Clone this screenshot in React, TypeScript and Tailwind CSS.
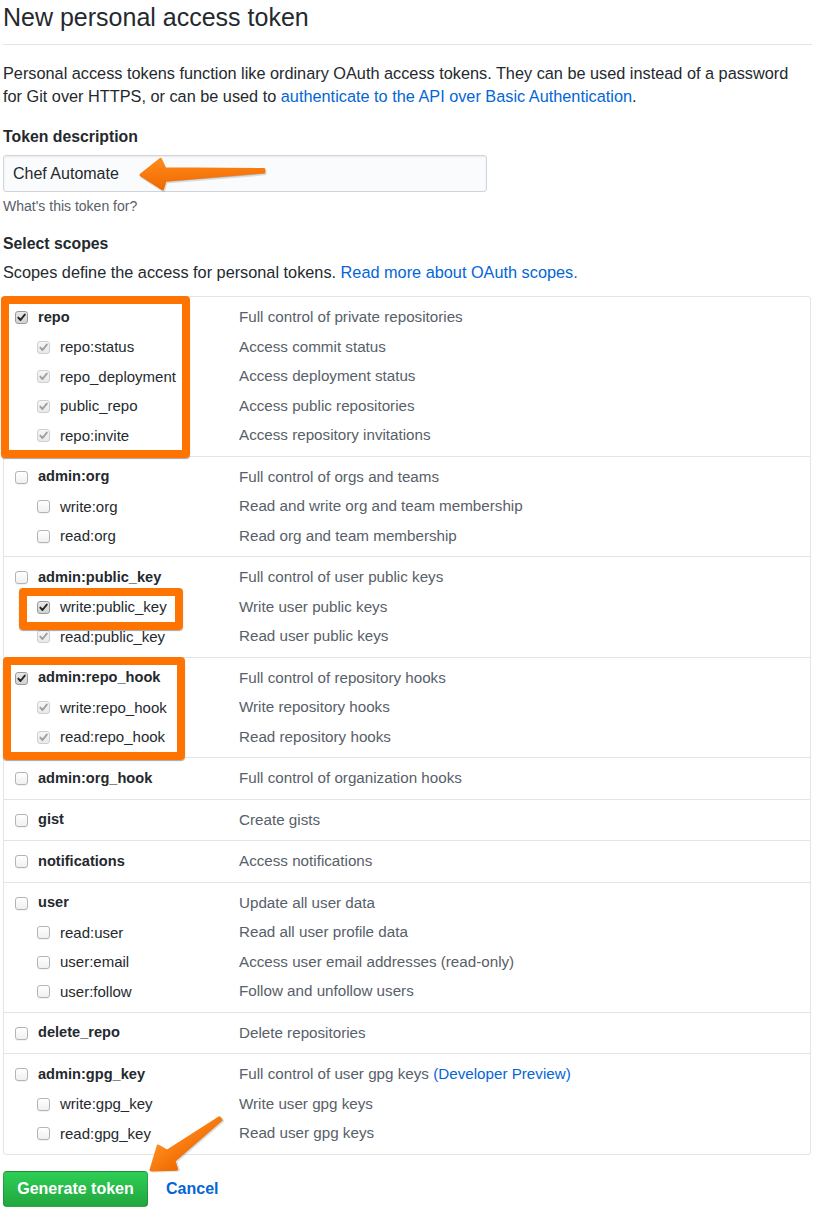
import React from "react";

type CheckState = "off" | "on" | "implied";

interface Scope {
  name: string;
  desc: React.ReactNode;
  state: CheckState;
}

interface ScopeGroup {
  top: Scope;
  subs: Scope[];
}

const groups: ScopeGroup[] = [
  {
    top: { name: "repo", desc: "Full control of private repositories", state: "on" },
    subs: [
      { name: "repo:status", desc: "Access commit status", state: "implied" },
      { name: "repo_deployment", desc: "Access deployment status", state: "implied" },
      { name: "public_repo", desc: "Access public repositories", state: "implied" },
      { name: "repo:invite", desc: "Access repository invitations", state: "implied" },
    ],
  },
  {
    top: { name: "admin:org", desc: "Full control of orgs and teams", state: "off" },
    subs: [
      { name: "write:org", desc: "Read and write org and team membership", state: "off" },
      { name: "read:org", desc: "Read org and team membership", state: "off" },
    ],
  },
  {
    top: { name: "admin:public_key", desc: "Full control of user public keys", state: "off" },
    subs: [
      { name: "write:public_key", desc: "Write user public keys", state: "on" },
      { name: "read:public_key", desc: "Read user public keys", state: "implied" },
    ],
  },
  {
    top: { name: "admin:repo_hook", desc: "Full control of repository hooks", state: "on" },
    subs: [
      { name: "write:repo_hook", desc: "Write repository hooks", state: "implied" },
      { name: "read:repo_hook", desc: "Read repository hooks", state: "implied" },
    ],
  },
  { top: { name: "admin:org_hook", desc: "Full control of organization hooks", state: "off" }, subs: [] },
  { top: { name: "gist", desc: "Create gists", state: "off" }, subs: [] },
  { top: { name: "notifications", desc: "Access notifications", state: "off" }, subs: [] },
  {
    top: { name: "user", desc: "Update all user data", state: "off" },
    subs: [
      { name: "read:user", desc: "Read all user profile data", state: "off" },
      { name: "user:email", desc: "Access user email addresses (read-only)", state: "off" },
      { name: "user:follow", desc: "Follow and unfollow users", state: "off" },
    ],
  },
  { top: { name: "delete_repo", desc: "Delete repositories", state: "off" }, subs: [] },
  {
    top: {
      name: "admin:gpg_key",
      desc: (
        <>
          Full control of user gpg keys <span className="text-[#0366d6]">(Developer Preview)</span>
        </>
      ),
      state: "off",
    },
    subs: [
      { name: "write:gpg_key", desc: "Write user gpg keys", state: "off" },
      { name: "read:gpg_key", desc: "Read user gpg keys", state: "off" },
    ],
  },
];

function Checkbox({ state }: { state: CheckState }) {
  if (state === "off") {
    return (
      <span className="block h-[13px] w-[13px] shrink-0 rounded-[3px] border border-[#b4b4b4] bg-gradient-to-b from-white to-[#f0f0f0] shadow-[0_1px_0_rgba(0,0,0,0.05)]" />
    );
  }
  const on = state === "on";
  return (
    <span
      className={
        on
          ? "grid h-[13px] w-[13px] shrink-0 place-items-center rounded-[3px] border border-[#9a9a9a] bg-gradient-to-b from-[#e8e8e8] to-[#d2d2d2]"
          : "grid h-[13px] w-[13px] shrink-0 place-items-center rounded-[3px] border border-[#cfcfcf] bg-gradient-to-b from-[#f6f6f6] to-[#e9e9e9]"
      }
    >
      <svg width="11" height="11" viewBox="0 0 11 11">
        <path
          d="M2.3 5.6 L4.5 8 L8.8 2.6"
          fill="none"
          stroke={on ? "#262626" : "#a0a0a0"}
          strokeWidth="1.9"
          strokeLinecap="round"
          strokeLinejoin="round"
        />
      </svg>
    </span>
  );
}

function ScopeRow({ scope, sub }: { scope: Scope; sub?: boolean }) {
  return (
    <div className="flex h-[29.5px] items-center">
      <div className={sub ? "flex w-[235px] items-center pl-[33px]" : "flex w-[235px] items-center pl-[11px]"}>
        <Checkbox state={scope.state} />
        <span className={sub ? "ml-[10px] text-[#24292e]" : "ml-[10px] text-[14.6px] font-bold text-[#24292e]"}>
          {scope.name}
        </span>
      </div>
      <div className="text-[15.2px] text-[#586069]">{scope.desc}</div>
    </div>
  );
}

function Arrow({ x, y, angle, length }: { x: number; y: number; angle: number; length: number }) {
  const d = `M0 0 L20 -15 L24 -5.5 L${length} -1.2 L${length} 1.2 L24 6 L21 14.5 Z`;
  return (
    <g transform={`translate(${x} ${y}) rotate(${angle})`}>
      <path d={d} fill="rgba(0,0,0,0.18)" transform="translate(1 2)" stroke="rgba(0,0,0,0.12)" strokeWidth="3" strokeLinejoin="round" />
      <path d={d} fill="url(#arrowFill)" stroke="url(#arrowFill)" strokeWidth="3" strokeLinejoin="round" />
    </g>
  );
}

export default function App() {
  return (
    <div className="relative min-h-[1216px] w-[815px] bg-white font-['Liberation_Sans',Arial,sans-serif] text-[15.4px] text-[#24292e]">
      <div className="px-[3px]">
        <h1 className="mt-[2px] border-b border-[#e1e4e8] pb-[12px] text-[25px] leading-[30px] font-normal text-[#24292e]">
          New personal access token
        </h1>

        <p className="mt-[17px] text-[16.3px] leading-[23px]">
          Personal access tokens function like ordinary OAuth access tokens. They can be used instead of a password
          <br />
          for Git over HTTPS, or can be used to{" "}
          <a className="text-[#0366d6]">authenticate to the API over Basic Authentication</a>.
        </p>

        <div className="mt-[17px] text-[15.8px] leading-[23px] font-bold">Token description</div>
        <div className="mt-[7px] flex h-[37px] w-[484px] items-center rounded-[3px] border border-[#d1d5da] bg-[#fafbfc] px-[9px] text-[16px] shadow-[inset_0_1px_2px_rgba(27,31,35,0.075)]">
          Chef Automate
        </div>
        <div className="mt-[5px] text-[14px] leading-[18px] text-[#586069]">What's this token for?</div>

        <div className="mt-[17px] text-[15.8px] leading-[23px] font-bold">Select scopes</div>
        <p className="mt-[6px] text-[16.3px] leading-[23px]">
          Scopes define the access for personal tokens.{" "}
          <a className="text-[#0366d6]">Read more about OAuth scopes.</a>
        </p>

        <div className="mt-[12px] w-[808px] rounded-[3px] border border-[#e1e4e8] text-[15px]">
          {groups.map((group, i) => (
            <div key={group.top.name} className={i === 0 ? "pt-[6px] pb-[5px]" : "border-t border-[#e1e4e8] pt-[6px] pb-[5px]"}>
              <ScopeRow scope={group.top} />
              {group.subs.map((sub) => (
                <ScopeRow key={sub.name} scope={sub} sub />
              ))}
            </div>
          ))}
        </div>

        <div className="mt-[16px] flex items-center">
          <button className="h-[36px] w-[145px] rounded-[4px] border border-[rgba(27,31,35,0.2)] bg-gradient-to-b from-[#2ecf55] to-[#22a63f] text-[16px] font-bold text-white">
            Generate token
          </button>
          <a className="ml-[18px] text-[16px] font-bold text-[#0366d6]">Cancel</a>
        </div>
      </div>

      {/* annotation highlights */}
      <div className="pointer-events-none absolute top-[294px] left-[1px] h-[162px] w-[189px] rounded-[4px] border-[8px] border-[#ff7300] shadow-[0_1px_1px_rgba(0,0,0,0.35)]" />
      <div className="pointer-events-none absolute top-[586px] left-[19px] h-[42px] w-[164px] rounded-[4px] border-[8px] border-[#ff7300] shadow-[0_1px_1px_rgba(0,0,0,0.35)]" />
      <div className="pointer-events-none absolute top-[655px] left-[3px] h-[103px] w-[182px] rounded-[4px] border-[8px] border-[#ff7300] shadow-[0_1px_1px_rgba(0,0,0,0.35)]" />

      <svg className="pointer-events-none absolute top-0 left-0" width="815" height="1216" viewBox="0 0 815 1216">
        <defs>
          <linearGradient id="arrowFill" x1="0" y1="0" x2="0" y2="1">
            <stop offset="0" stopColor="#ff8a1c" />
            <stop offset="1" stopColor="#f06a00" />
          </linearGradient>
        </defs>
        <Arrow x={141} y={173} angle={-2} length={123} />
        <Arrow x={151} y={1168} angle={-36.5} length={86} />
      </svg>
    </div>
  );
}
